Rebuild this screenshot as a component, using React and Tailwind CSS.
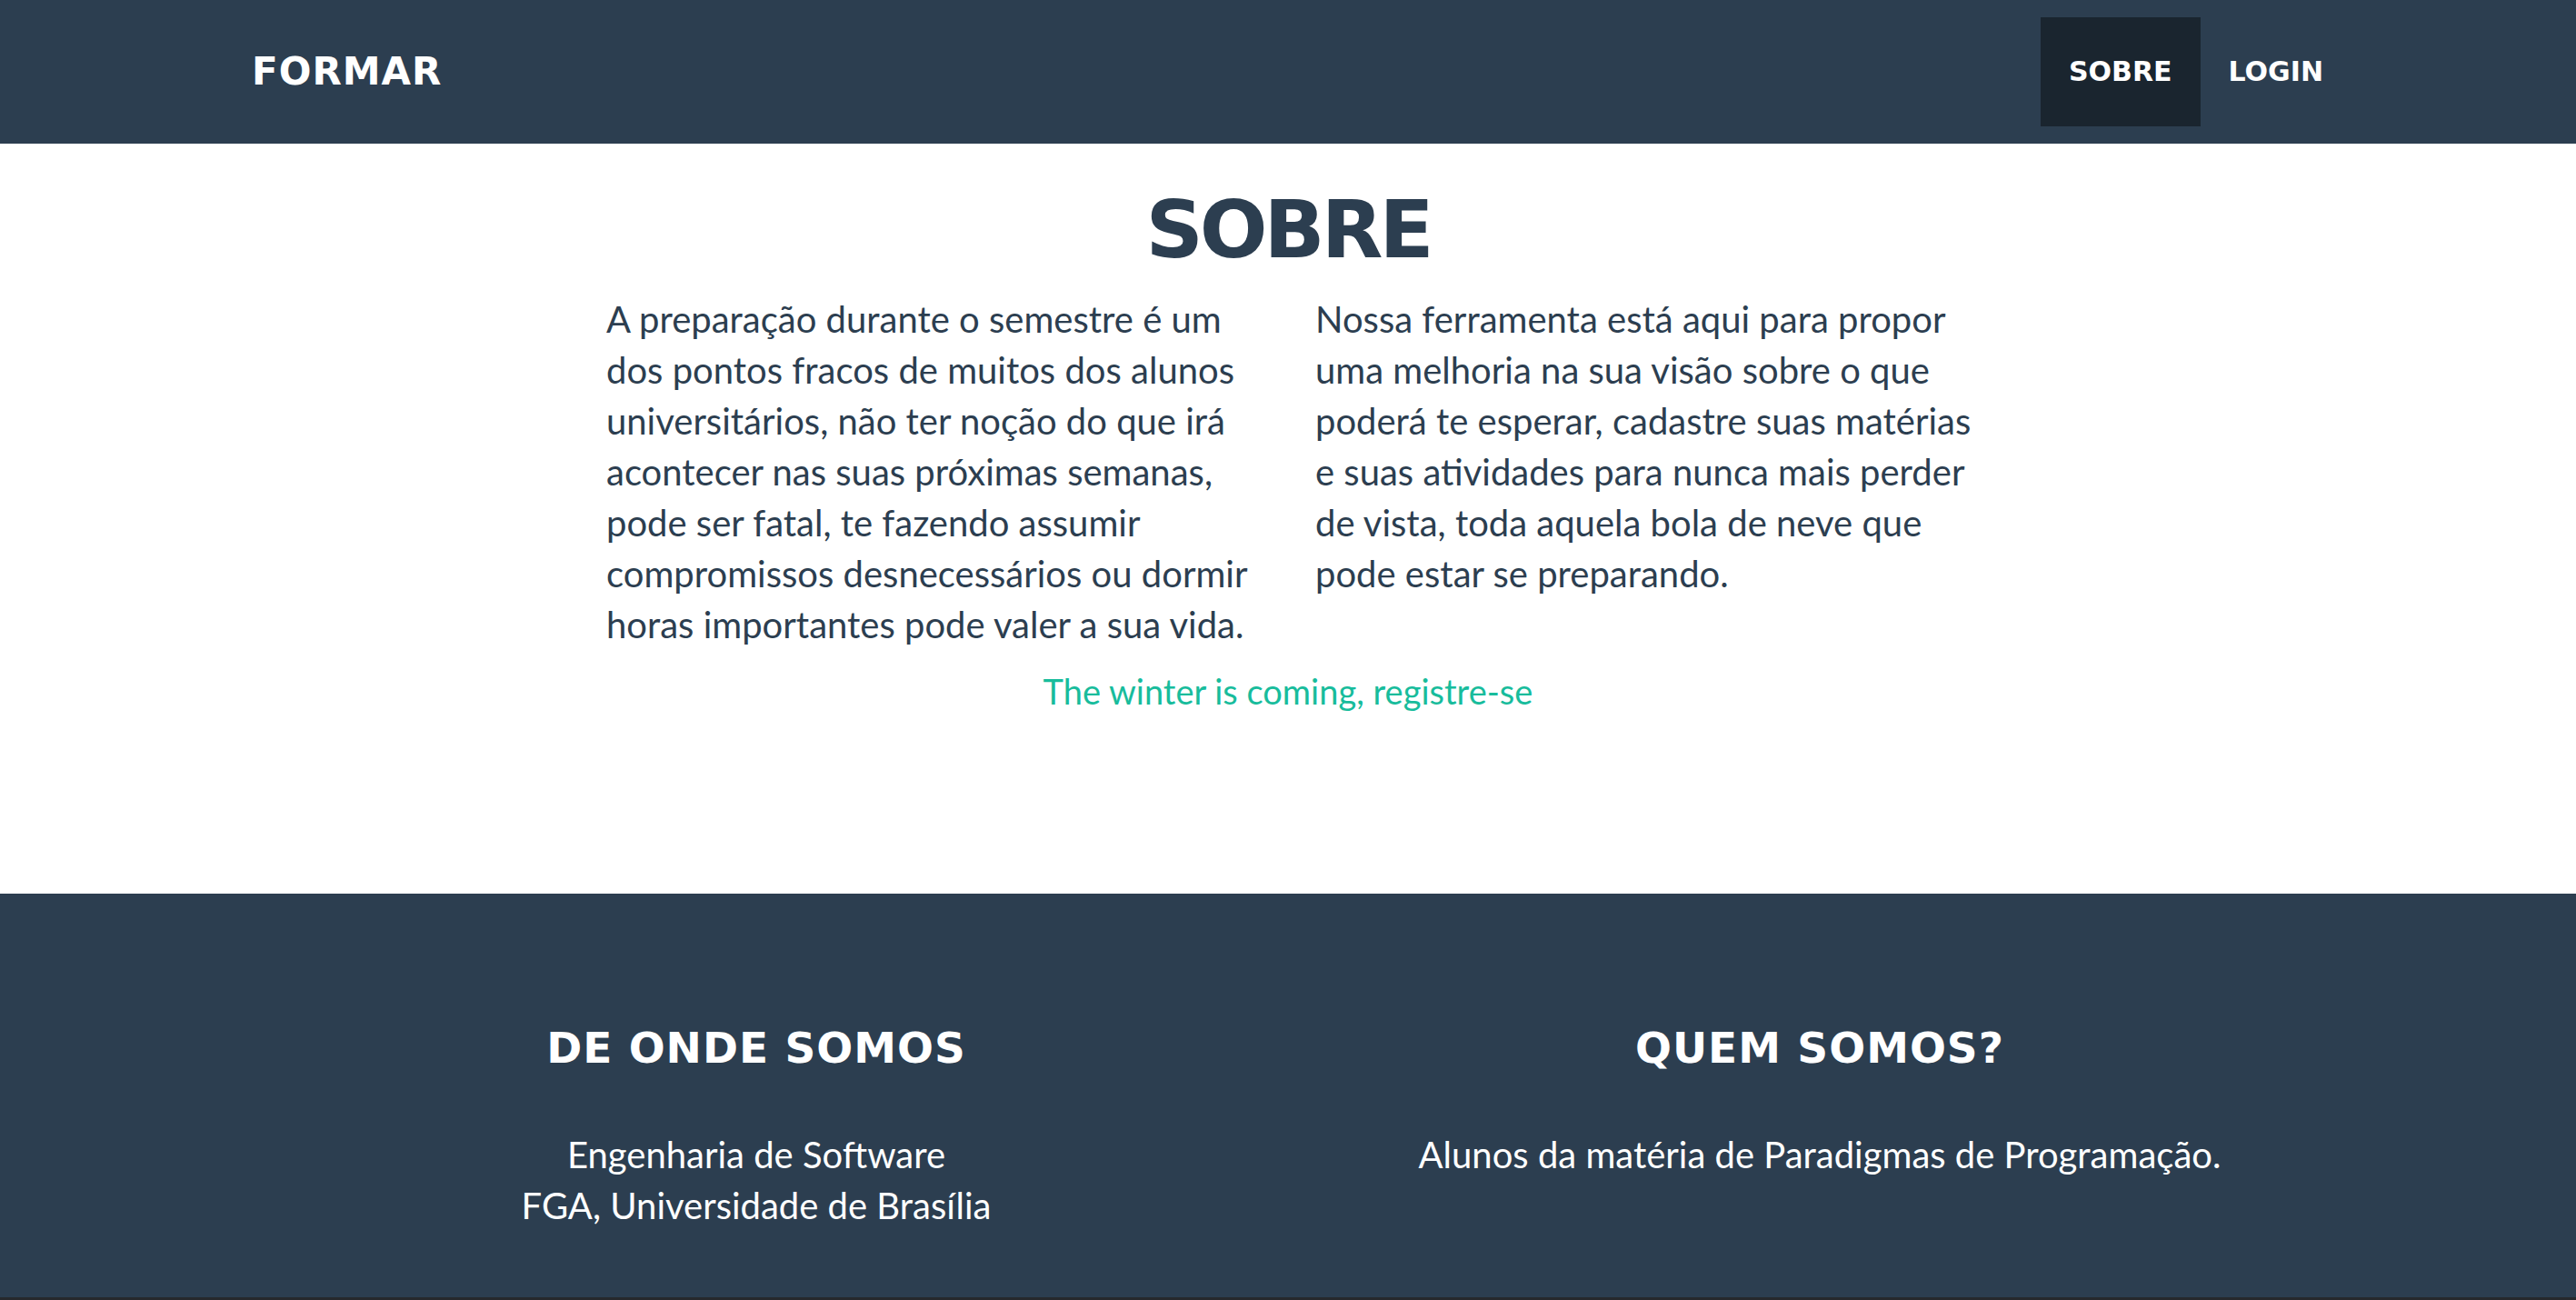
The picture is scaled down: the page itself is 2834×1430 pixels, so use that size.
import React from 'react';

const leftLines = [
    'A preparação durante o semestre é um',
    'dos pontos fracos de muitos dos alunos',
    'universitários, não ter noção do que irá',
    'acontecer nas suas próximas semanas,',
    'pode ser fatal, te fazendo assumir',
    'compromissos desnecessários ou dormir',
    'horas importantes pode valer a sua vida.',
];

const rightLines = [
    'Nossa ferramenta está aqui para propor',
    'uma melhoria na sua visão sobre o que',
    'poderá te esperar, cadastre suas matérias',
    'e suas atividades para nunca mais perder',
    'de vista, toda aquela bola de neve que',
    'pode estar se preparando.',
];

const Navbar = () => (
    <nav className="bg-[#2c3e50] h-[158px]">
        <div className="w-[2340px] mx-auto px-[30px] h-full flex items-center justify-between">
            <a href="#" className="font-['DejaVu_Sans',sans-serif] font-bold text-[42px] leading-none tracking-[1px] text-white">
                FORMAR
            </a>
            <ul className="flex -mr-[30px]">
                <li>
                    <a href="#" className="h-[120px] px-[31px] flex items-center bg-[#1a252f] font-['DejaVu_Sans',sans-serif] font-bold text-[30px] leading-none text-white">
                        SOBRE
                    </a>
                </li>
                <li>
                    <a href="#" className="h-[120px] px-[31px] flex items-center font-['DejaVu_Sans',sans-serif] font-bold text-[30px] leading-none text-white">
                        LOGIN
                    </a>
                </li>
            </ul>
        </div>
    </nav>
);

const App = () => {
    return (
        <div className="min-h-screen bg-white font-['Lato',sans-serif]">
            <Navbar />

            {/* sobre */}
            <section className="pt-[51px] h-[825px]">
                <h2 className="text-center font-['DejaVu_Sans',sans-serif] font-bold text-[88px] leading-none tracking-[-4px] text-[#2c3e50]">
                    SOBRE
                </h2>
                <div className="mt-[26px] flex justify-center text-[40px] leading-[56px] text-[#2c3e50]">
                    <div className="w-[780px] px-[30px]">
                        {leftLines.map((line, i) => (
                            <span key={i} className="block whitespace-nowrap">{line}</span>
                        ))}
                    </div>
                    <div className="w-[780px] px-[30px]">
                        {rightLines.map((line, i) => (
                            <span key={i} className="block whitespace-nowrap">{line}</span>
                        ))}
                    </div>
                </div>
                <div className="mt-[17px] text-center text-[38px] leading-[56px]">
                    <a href="#" className="text-[#18bc9c]">The winter is coming, registre-se</a>
                </div>
            </section>

            {/* footer */}
            <footer className="text-white text-center">
                <div className="bg-[#2c3e50] h-[444px] pt-[146px]">
                    <div className="w-[2340px] mx-auto grid grid-cols-2">
                        <div className="px-[30px]">
                            <h3 className="font-['DejaVu_Sans',sans-serif] font-bold text-[47px] leading-none tracking-[1px]">
                                DE ONDE SOMOS
                            </h3>
                            <p className="mt-[66px] text-[40px] leading-[56px]">
                                Engenharia de Software
                                <br />
                                FGA, Universidade de Brasília
                            </p>
                        </div>
                        <div className="px-[30px]">
                            <h3 className="font-['DejaVu_Sans',sans-serif] font-bold text-[47px] leading-none tracking-[1px]">
                                QUEM SOMOS?
                            </h3>
                            <p className="mt-[66px] text-[40px] leading-[56px]">
                                Alunos da matéria de Paradigmas de Programação.
                            </p>
                        </div>
                    </div>
                </div>
                <div className="bg-[#26292d] h-[90px]"></div>
            </footer>
        </div>
    );
};

export default App;
